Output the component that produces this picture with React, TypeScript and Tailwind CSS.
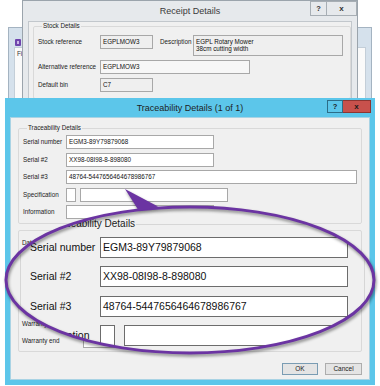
import React from 'react';

type Kids = { className?: string; children?: React.ReactNode };

// small window text box
const Box: React.FC<Kids> = ({ className = '', children }) => (
    <div className={`h-[14px] border border-[#a8a8a8] px-[2px] text-[6.3px] leading-[12px] text-[#111] whitespace-nowrap overflow-hidden ${className}`}>
        {children}
    </div>
);

const Label: React.FC<Kids> = ({ className = '', children }) => (
    <div className={`h-[14px] leading-[14px] text-[6.3px] text-[#222] whitespace-nowrap shrink-0 ${className}`}>{children}</div>
);

// magnified text box
const BigBox: React.FC<Kids> = ({ className = '', children }) => (
    <div className={`h-[21px] border border-[#6c6c6c] bg-white pl-[2px] text-[10.5px] leading-[19px] text-[#111] whitespace-nowrap overflow-hidden ${className}`}>
        {children}
    </div>
);

const BigLabel: React.FC<Kids> = ({ className = '', children }) => (
    <div className={`h-[21px] leading-[21px] text-[10.5px] text-[#111] whitespace-nowrap shrink-0 ${className}`}>{children}</div>
);

const BackWindow = () => (
    <div className="absolute left-[8px] top-[27px] w-[364px] h-[80px] border border-[#a4b3c1] bg-[#d5e1ec] flex flex-col">
        <div className="h-[19px] pt-[11px] pl-[6px]">
            <svg width="6" height="7" viewBox="0 0 6 7">
                <rect x="0" y="0" width="6" height="7" rx="1" fill="#6f45ad" />
                <rect x="2" y="2" width="2" height="3" fill="#c9b6e6" />
            </svg>
        </div>
        <div className="flex-1 mx-[5px] border border-[#c3ced8] bg-[#fafafa] pl-[2px] pt-[2px] text-[6.3px] leading-[7px] text-[#333]">
            File
        </div>
    </div>
);

const ReceiptWindow = () => (
    <div className="absolute left-[22px] top-0 w-[336px] h-[112px] border border-[#9ba4ac] bg-[#e6e9ec] flex flex-col">
        <div className="grid grid-cols-[1fr_auto_1fr] h-[20px]">
            <div />
            <div className="text-[9px] leading-[20px] text-[#3a3a3a]">Receipt Details</div>
            <div className="flex justify-end items-start">
                <div className="w-[17px] h-[15px] border border-[#a7aeb4] flex items-center justify-center text-[7.5px] font-bold text-[#333]">?</div>
                <div className="w-[30px] h-[15px] border border-l-0 border-[#a7aeb4] flex items-center justify-center text-[8px] font-bold text-[#333]">x</div>
            </div>
        </div>
        <div className="flex-1 mx-[5px] border border-[#c2c7cc] bg-[#f0f0f0] pl-[4px]">
            <fieldset className="border border-[#d9d9d9] rounded-[2px] px-[4px] pb-[6px]">
                <legend className="ml-[4px] px-[1px] text-[6.3px] leading-[8px] text-[#222]">Stock Details</legend>
                <div className="flex flex-col gap-[4px] pt-[5px]">
                    <div className="flex items-start">
                        <Label className="w-[62px]">Stock reference</Label>
                        <Box className="w-[53px] bg-[#efefef]">EGPLMOW3</Box>
                        <Label className="ml-[7px] w-[33px]">Description</Label>
                        <div className="w-[150px] h-[21px] border border-[#a8a8a8] bg-[#efefef] px-[2px] pt-[2px] text-[6.3px] leading-[7px] text-[#111]">
                            <div>EGPL Rotary Mower</div>
                            <div>38cm cutting width</div>
                        </div>
                    </div>
                    <div className="flex items-start">
                        <Label className="w-[62px]">Alternative reference</Label>
                        <Box className="w-[150px] bg-[#f7f7f7]">EGPLMOW3</Box>
                    </div>
                    <div className="flex items-start">
                        <Label className="w-[62px]">Default bin</Label>
                        <Box className="w-[53px] bg-[#efefef]">C7</Box>
                    </div>
                </div>
            </fieldset>
        </div>
    </div>
);

const TraceWindow = () => (
    <div className="absolute left-[5px] top-[98px] w-[370px] h-[287px] bg-[#5cc6ea] flex flex-col">
        <div className="grid grid-cols-[1fr_auto_1fr] h-[19px]">
            <div />
            <div className="text-[9px] leading-[20px] text-[#1e1e1e]">Traceability Details (1 of 1)</div>
            <div className="flex justify-end items-start pt-[2px] pr-[4px]">
                <div className="w-[16px] h-[13px] border border-[#2c6d88] flex items-center justify-center text-[7.5px] font-bold text-[#1a1a1a]">?</div>
                <div className="w-[28px] h-[13px] border border-l-0 border-[#8d3531] bg-[#c8514c] flex items-center justify-center text-[8px] font-bold text-[#1a1a1a]">x</div>
            </div>
        </div>
        <div className="mx-[5px] h-[263px] border border-[#a9d3e4] bg-[#f0f0f0] px-[7px] flex flex-col">
            <fieldset className="mt-[6px] border border-[#d9d9d9] rounded-[2px] px-[4px] pb-[4px]">
                <legend className="ml-[4px] px-[1px] text-[6.3px] leading-[8px] text-[#222]">Traceability Details</legend>
                <div className="flex flex-col gap-[3.5px] pt-[3px]">
                    <div className="flex">
                        <Label className="w-[43px]">Serial number</Label>
                        <Box className="w-[148px] bg-white border-[#8a8a8a]">EGM3-89Y79879068</Box>
                    </div>
                    <div className="flex">
                        <Label className="w-[43px]">Serial #2</Label>
                        <Box className="w-[148px] bg-white border-[#8a8a8a]">XX98-08I98-8-898080</Box>
                    </div>
                    <div className="flex">
                        <Label className="w-[43px]">Serial #3</Label>
                        <Box className="flex-1 bg-white border-[#8a8a8a]">48764-5447656464678986767</Box>
                    </div>
                    <div className="flex">
                        <Label className="w-[43px]">Specification</Label>
                        <Box className="w-[10px] bg-white border-[#8a8a8a]" />
                        <Box className="ml-[4px] w-[148px] bg-white border-[#8a8a8a]" />
                    </div>
                    <div className="flex">
                        <Label className="w-[43px]">Information</Label>
                        <Box className="w-[148px] bg-white border-[#8a8a8a]" />
                    </div>
                </div>
            </fieldset>
            <div className="mt-[6px] h-[122px] border border-[#d9d9d9] rounded-[2px] px-[3px] pt-[5px] pb-[3px] flex flex-col">
                <Label>Date</Label>
                <div className="flex-1" />
                <div className="flex flex-col gap-[3px]">
                    <div className="flex">
                        <Label className="w-[61px]">Warranty start</Label>
                        <Box className="w-[32px] bg-white border-[#8a8a8a]" />
                    </div>
                    <div className="flex">
                        <Label className="w-[61px]">Warranty end</Label>
                        <Box className="w-[32px] bg-white border-[#8a8a8a]" />
                    </div>
                </div>
            </div>
            <div className="mt-[11px] flex justify-end gap-[7px]">
                <div className="w-[36px] h-[12px] border border-[#7a9cb3] bg-[#e4e4e4] text-center text-[6.5px] leading-[10px] text-[#222]">OK</div>
                <div className="w-[37px] h-[12px] border border-[#adadad] bg-[#e4e4e4] text-center text-[6.5px] leading-[10px] text-[#222]">Cancel</div>
            </div>
        </div>
    </div>
);

// enlarged view of the serial fields, clipped to the callout ellipse
const Magnifier = () => (
    <div className="absolute left-[6px] top-[207px] w-[368px] h-[146px] bg-[#f0f0f0] [clip-path:ellipse(184px_73px_at_50%_50%)]">
        <fieldset className="mx-[14px] mt-[11px] border border-[#d6d6d6] rounded-[3px] pl-[9px] pb-[20px]">
            <legend className="ml-[20px] px-[1px] text-[10px] leading-[12px] text-[#222]">Traceability Details</legend>
            <div className="flex flex-col gap-[8.3px] pt-[7px]">
                <div className="flex">
                    <BigLabel className="w-[70px]">Serial number</BigLabel>
                    <BigBox className="w-[248px]">EGM3-89Y79879068</BigBox>
                </div>
                <div className="flex">
                    <BigLabel className="w-[70px]">Serial #2</BigLabel>
                    <BigBox className="w-[248px]">XX98-08I98-8-898080</BigBox>
                </div>
                <div className="flex">
                    <BigLabel className="w-[70px]">Serial #3</BigLabel>
                    <BigBox className="w-[248px]">48764-5447656464678986767</BigBox>
                </div>
                <div className="flex">
                    <BigLabel className="w-[70px]">Specification</BigLabel>
                    <BigBox className="w-[15px]" />
                    <BigBox className="ml-[9px] w-[240px]" />
                </div>
            </div>
        </fieldset>
    </div>
);

const Callout = () => (
    <svg
        className="absolute inset-0 pointer-events-none [filter:drop-shadow(1px_2px_1.5px_rgba(0,0,0,0.45))]"
        width="380"
        height="386"
        viewBox="0 0 380 386"
    >
        <ellipse cx="190" cy="280" rx="184" ry="73" fill="none" stroke="#6b34a2" strokeWidth="3" />
        <polygon points="125,189 158,206.5 139,211" fill="#6b34a2" />
    </svg>
);

export default function App() {
    return (
        <div className="relative w-[380px] h-[386px] overflow-hidden bg-white font-['Liberation_Sans',Arial,sans-serif]">
            <BackWindow />
            <ReceiptWindow />
            <TraceWindow />
            <Magnifier />
            <Callout />
        </div>
    );
}
